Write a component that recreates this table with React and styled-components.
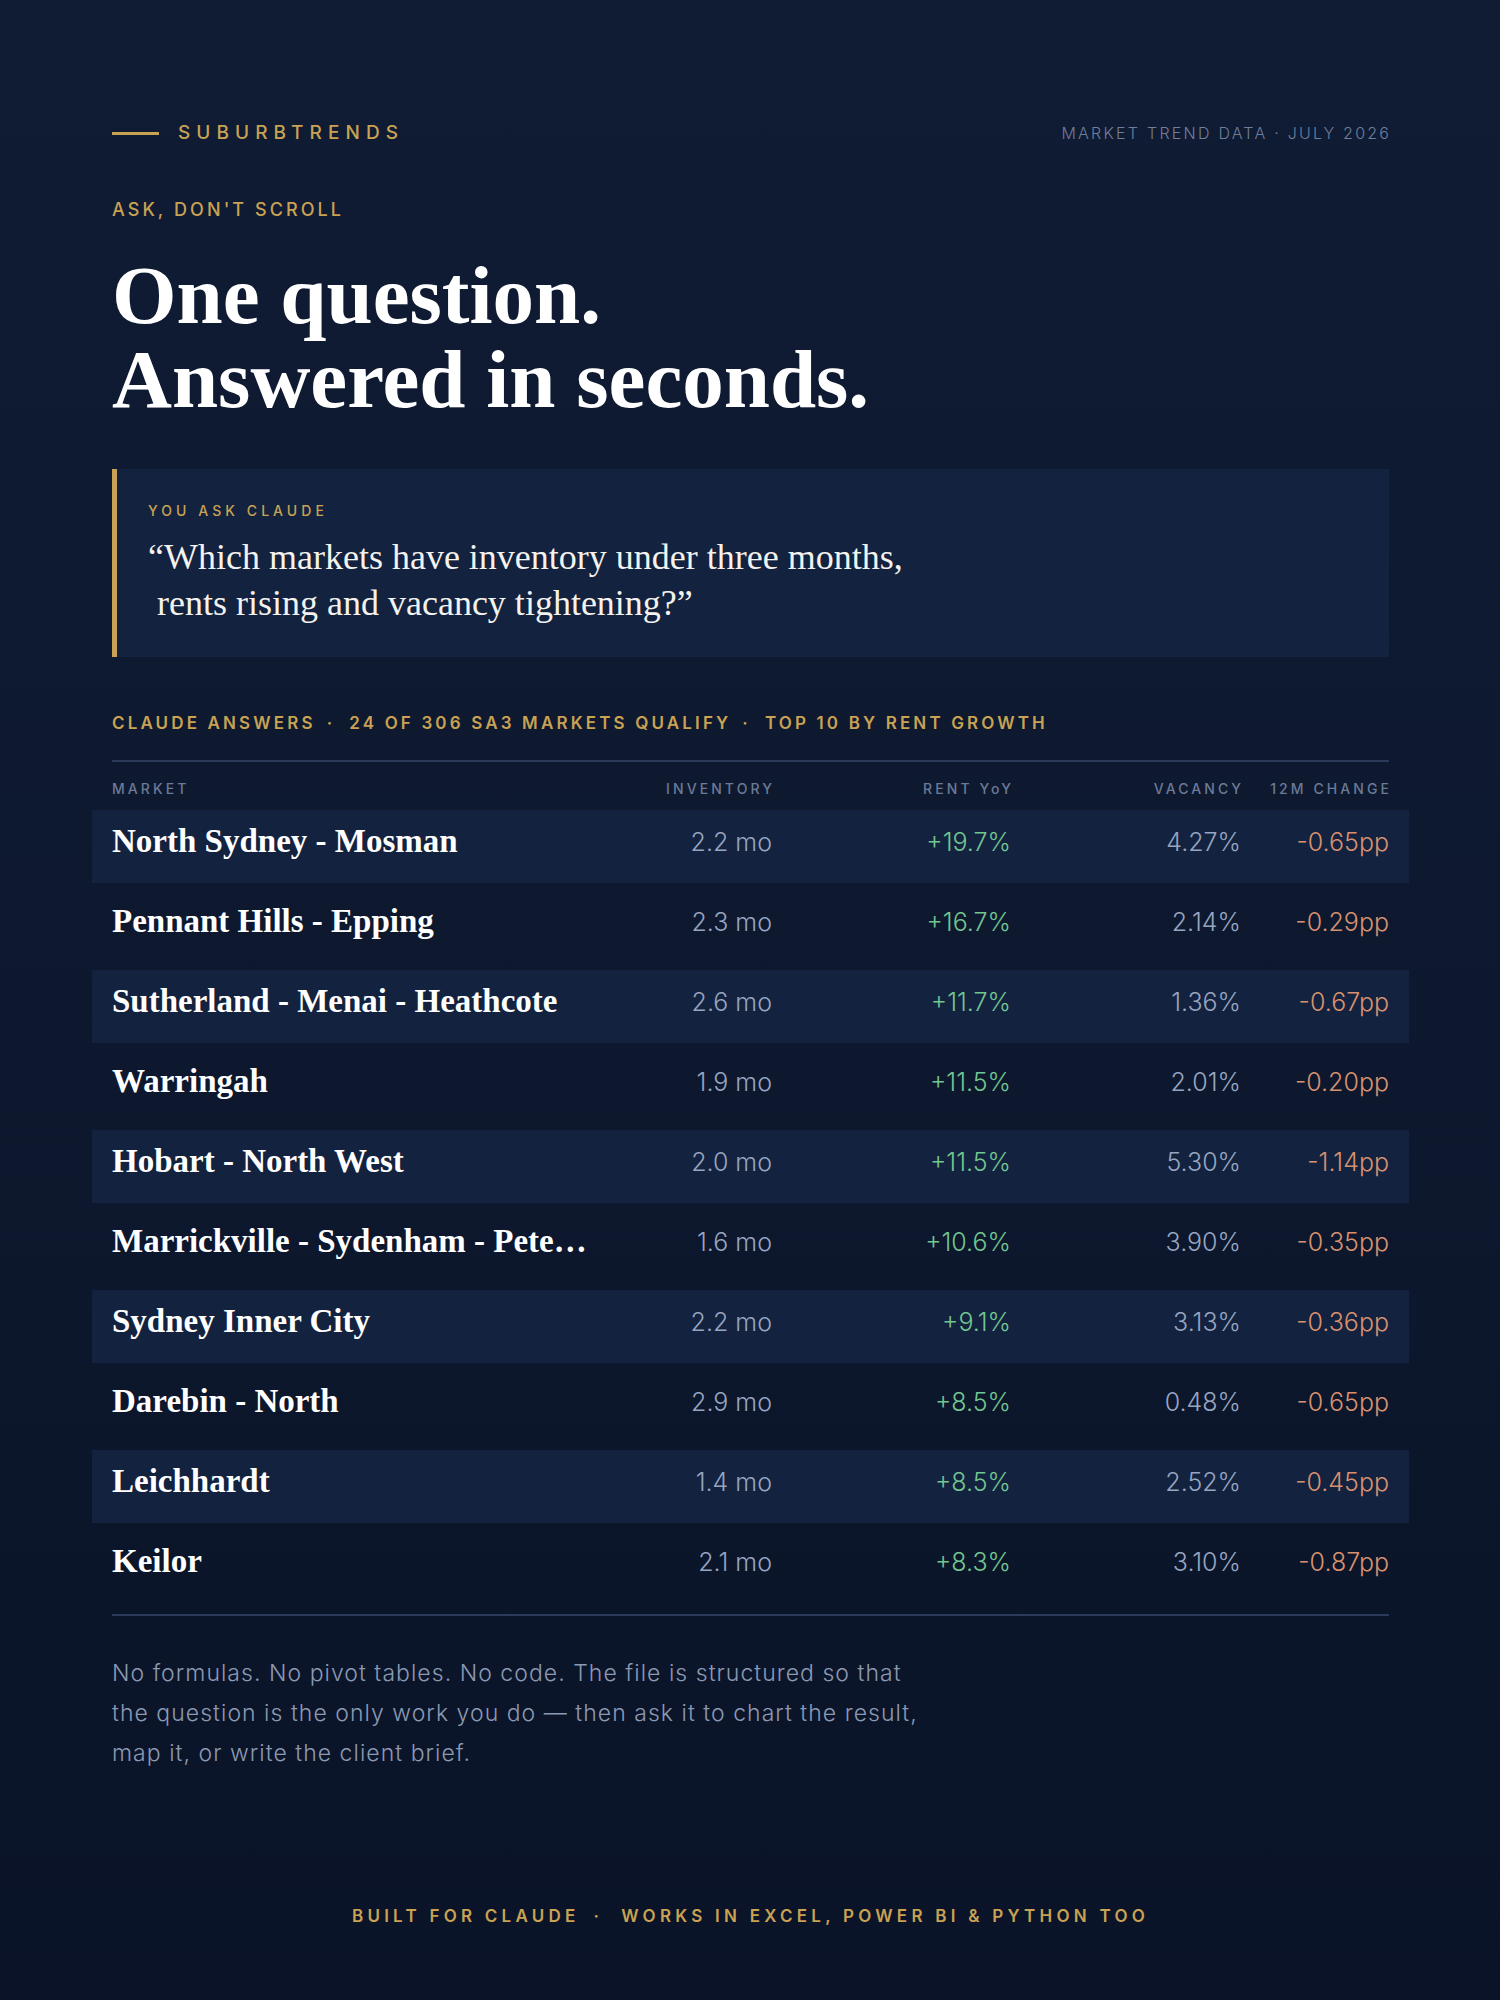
import React from "react";
import styled, { createGlobalStyle } from "styled-components";

const GOLD = "#c9a253";

const GlobalStyle = createGlobalStyle`
  * {
    box-sizing: border-box;
  }
  body {
    margin: 0;
    background: #0a1327;
  }
`;

const Page = styled.div`
  min-height: 2000px;
  padding: 121px 111px 80px 112px;
  background: linear-gradient(180deg, #101c34 0%, #0d182e 55%, #0a1327 100%);
  font-family: Inter, "Liberation Sans", sans-serif;
  color: #ffffff;
`;

const TopBar = styled.header`
  display: flex;
  align-items: center;
  justify-content: space-between;
  height: 24px;
`;

const Brand = styled.div`
  display: flex;
  align-items: center;
  gap: 19px;
`;

const BrandRule = styled.span`
  width: 47px;
  height: 3px;
  background: ${GOLD};
`;

const BrandName = styled.span`
  font-size: 19px;
  line-height: 24px;
  font-weight: 500;
  letter-spacing: 0.32em;
  color: ${GOLD};
`;

const Dateline = styled.span`
  font-size: 16px;
  font-weight: 300;
  letter-spacing: 0.14em;
  margin-right: -0.14em;
  color: #6f7e9c;
`;

const Eyebrow = styled.p`
  margin: 53px 0 0;
  font-size: 18px;
  line-height: 24px;
  font-weight: 500;
  letter-spacing: 0.17em;
  color: ${GOLD};
`;

const Headline = styled.h1`
  margin: 31px 0 0;
  font-family: "Liberation Serif", "DejaVu Serif", serif;
  font-weight: 700;
  font-size: 83px;
  line-height: 84px;
  color: #ffffff;
`;

const QuoteBox = styled.section`
  margin-top: 48px;
  padding: 32px 32px 31px 31px;
  background: #13223f;
  border-left: 5px solid ${GOLD};
`;

const QuoteLabel = styled.div`
  font-size: 14px;
  line-height: 20px;
  font-weight: 500;
  letter-spacing: 0.29em;
  color: ${GOLD};
`;

const QuoteText = styled.p`
  margin: 13px 0 0;
  font-family: "Liberation Serif", "DejaVu Serif", serif;
  font-size: 36px;
  line-height: 46px;
  color: #f4f2ee;
`;

const Caption = styled.div`
  margin-top: 54px;
  display: flex;
  align-items: center;
  font-size: 17px;
  line-height: 24px;
  font-weight: 600;
  letter-spacing: 0.185em;
  color: ${GOLD};
`;

const Dot = styled.span`
  margin: ${(p) => (p.$wide ? "0 18px 0 14px" : "0 14px 0 11px")};
`;

const Rule = styled.hr`
  margin: ${(p) => p.$top}px 0 0;
  border: 0;
  height: 2px;
  background: #2b3a58;
`;

const Table = styled.div`
  display: flex;
  flex-direction: column;
  gap: 7px;
`;

const cols = "500px 160px 239px 230px 148px";

const HeadRow = styled.div`
  display: grid;
  grid-template-columns: ${cols};
  align-items: center;
  height: 26px;
  margin: 13px 0 2px;
`;

const HeadCell = styled.span`
  font-size: 14px;
  font-weight: 500;
  letter-spacing: 0.22em;
  color: #6b7a97;
  text-align: ${(p) => (p.$left ? "left" : "right")};
  margin-right: ${(p) => (p.$left ? "0" : "-0.22em")};
`;

const Row = styled.div`
  display: grid;
  grid-template-columns: ${cols};
  align-items: center;
  height: 73px;
  margin: 0 -20px;
  padding: 0 20px 10px;
  background: ${(p) => (p.$striped ? "#13223f" : "transparent")};
`;

const Name = styled.span`
  padding-right: 22px;
  font-family: "Liberation Serif", "DejaVu Serif", serif;
  font-weight: 700;
  font-size: 33px;
  color: #ffffff;
  white-space: nowrap;
  overflow: hidden;
  text-overflow: ellipsis;
`;

const toneColor = {
  muted: "#97a5c0",
  up: "#72c690",
  down: "#d8916f",
};

const Num = styled.span`
  text-align: right;
  font-size: 25px;
  font-weight: 300;
  color: ${(p) => toneColor[p.$tone]};
`;

const Note = styled.p`
  margin: 37px 0 0;
  font-size: 23px;
  line-height: 40px;
  font-weight: 300;
  letter-spacing: 0.045em;
  color: #8c99b3;
`;

const Footer = styled.footer`
  margin-top: 131px;
  display: flex;
  justify-content: center;
  align-items: center;
  font-size: 17px;
  line-height: 24px;
  font-weight: 600;
  letter-spacing: 0.25em;
  color: ${GOLD};
`;

const markets = [
  ["North Sydney - Mosman", "2.2 mo", "+19.7%", "4.27%", "-0.65pp"],
  ["Pennant Hills - Epping", "2.3 mo", "+16.7%", "2.14%", "-0.29pp"],
  ["Sutherland - Menai - Heathcote", "2.6 mo", "+11.7%", "1.36%", "-0.67pp"],
  ["Warringah", "1.9 mo", "+11.5%", "2.01%", "-0.20pp"],
  ["Hobart - North West", "2.0 mo", "+11.5%", "5.30%", "-1.14pp"],
  ["Marrickville - Sydenham - Petersham", "1.6 mo", "+10.6%", "3.90%", "-0.35pp"],
  ["Sydney Inner City", "2.2 mo", "+9.1%", "3.13%", "-0.36pp"],
  ["Darebin - North", "2.9 mo", "+8.5%", "0.48%", "-0.65pp"],
  ["Leichhardt", "1.4 mo", "+8.5%", "2.52%", "-0.45pp"],
  ["Keilor", "2.1 mo", "+8.3%", "3.10%", "-0.87pp"],
];

const App = () => {
  return (
    <Page>
      <GlobalStyle />
      <TopBar>
        <Brand>
          <BrandRule />
          <BrandName>SUBURBTRENDS</BrandName>
        </Brand>
        <Dateline>MARKET TREND DATA · JULY 2026</Dateline>
      </TopBar>

      <Eyebrow>ASK, DON'T SCROLL</Eyebrow>
      <Headline>
        One question.
        <br />
        Answered in seconds.
      </Headline>

      <QuoteBox>
        <QuoteLabel>YOU ASK CLAUDE</QuoteLabel>
        <QuoteText>
          “Which markets have inventory under three months,
          <br />
          &nbsp;rents rising and vacancy tightening?”
        </QuoteText>
      </QuoteBox>

      <Caption>
        CLAUDE ANSWERS
        <Dot>·</Dot>
        24 OF 306 SA3 MARKETS QUALIFY
        <Dot>·</Dot>
        TOP 10 BY RENT GROWTH
      </Caption>
      <Rule $top={25} />

      <Table>
        <HeadRow>
          <HeadCell $left>MARKET</HeadCell>
          <HeadCell>INVENTORY</HeadCell>
          <HeadCell>RENT YoY</HeadCell>
          <HeadCell>VACANCY</HeadCell>
          <HeadCell>12M CHANGE</HeadCell>
        </HeadRow>
        {markets.map(([name, inv, rent, vac, chg], i) => (
          <Row key={name} $striped={i % 2 === 0}>
            <Name>{name}</Name>
            <Num $tone="muted">{inv}</Num>
            <Num $tone="up">{rent}</Num>
            <Num $tone="muted">{vac}</Num>
            <Num $tone="down">{chg}</Num>
          </Row>
        ))}
      </Table>
      <Rule $top={11} />

      <Note>
        No formulas. No pivot tables. No code. The file is structured so that
        <br />
        the question is the only work you do — then ask it to chart the result,
        <br />
        map it, or write the client brief.
      </Note>

      <Footer>
        BUILT FOR CLAUDE
        <Dot $wide>·</Dot>
        WORKS IN EXCEL, POWER BI &amp; PYTHON TOO
      </Footer>
    </Page>
  );
};

export default App;
